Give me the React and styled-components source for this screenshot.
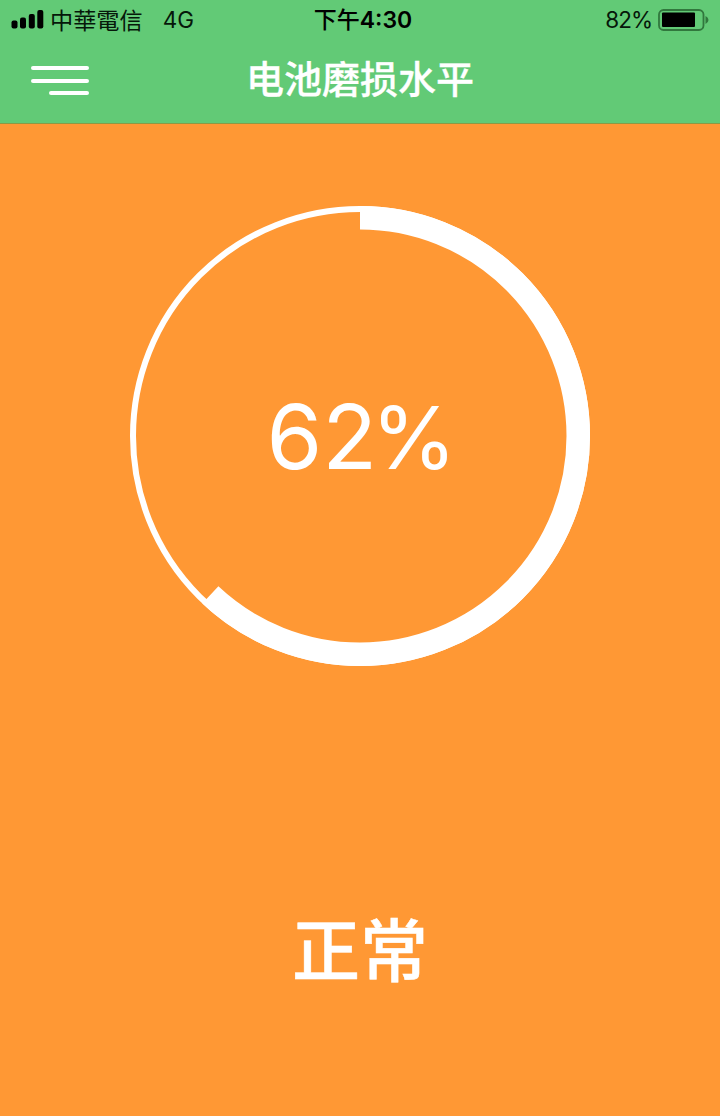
import React from 'react';
import styled, { createGlobalStyle } from 'styled-components';

const GlobalStyle = createGlobalStyle`
  * {
    box-sizing: border-box;
  }

  body {
    margin: 0;
    font-family: Inter, 'Noto Sans CJK SC', sans-serif;
  }
`;

const Screen = styled.div`
  display: flex;
  flex-direction: column;
  width: 720px;
  height: 1116px;
  overflow: hidden;
  background: #ff9834;
`;

const Header = styled.header`
  height: 124px;
  background: #62ca76;
  border-bottom: 1px solid #8b9a45;
`;

const StatusBar = styled.div`
  display: grid;
  grid-template-columns: 1fr auto 1fr;
  align-items: center;
  height: 40px;
  padding: 0 11px;
  color: #06180a;
  font-size: 23px;
  line-height: 40px;
  white-space: nowrap;
`;

const StatusGroup = styled.div`
  display: flex;
  align-items: center;
  justify-content: ${props => props.$end ? 'flex-end' : 'flex-start'};
`;

const Carrier = styled.span`
  margin: 0 20px 0 6px;
  padding-bottom: 2px;
  font-family: 'Noto Sans CJK TC', sans-serif;
  font-size: 23.2px;
  line-height: 38px;
`;

const Network = styled.span`
  font-size: 22.5px;
`;

const Clock = styled.span`
  padding-left: 6px;
  color: #000;
  font-weight: 600;
  font-family: Inter, 'Noto Sans CJK TC', sans-serif;
`;

const Meridiem = styled.span`
  font-weight: 500;
`;

const Charge = styled.span`
  margin-right: 6px;
  font-size: 22.5px;
  letter-spacing: -1px;
`;

const NavBar = styled.div`
  display: grid;
  grid-template-columns: 58px 1fr 58px;
  align-items: center;
  height: 80px;
  padding: 0 31px;
`;

const MenuButton = styled.button`
  display: flex;
  flex-direction: column;
  align-items: flex-end;
  gap: 8.5px;
  padding: 1px 0 0;
  border: 0;
  background: none;
`;

const MenuLine = styled.span`
  width: ${props => props.$short ? '40px' : '58px'};
  height: 4px;
  border-radius: 2px;
  background: #fff;
`;

const Title = styled.h1`
  margin: 0;
  padding-bottom: 2px;
  color: #fff;
  font-size: 38px;
  font-weight: 500;
  line-height: 78px;
  text-align: center;
  -webkit-text-stroke: 0.3px #fff;
`;

const Content = styled.main`
  display: flex;
  flex-direction: column;
  align-items: center;
  padding-top: 82px;
`;

const Gauge = styled.div`
  display: grid;
  place-items: center;
  width: 460px;
  height: 460px;

  > * {
    grid-area: 1 / 1;
  }
`;

const Percent = styled.span`
  padding: 1px 0 0 3px;
  color: #fff;
  font-size: 90px;
  font-weight: 400;
  line-height: 1;
`;

const PercentSign = styled.span`
  margin-left: -6px;
  font-size: 87px;
`;

const Verdict = styled.p`
  margin: 235px 0 0;
  color: #fff;
  font-size: 68px;
  font-weight: 500;
  line-height: 100px;
  -webkit-text-stroke: 0.5px #fff;
`;

const SignalIcon = () => (
  <svg width="33" height="20" viewBox="0 0 33 20">
    <rect x="0.5" y="10.5" width="6" height="8" rx="2" />
    <rect x="9" y="7.5" width="6" height="11" rx="2" />
    <rect x="17.8" y="4" width="6" height="14.5" rx="2" />
    <rect x="26.3" y="0" width="6" height="18.5" rx="2" />
  </svg>
);

const BatteryIcon = () => (
  <svg width="51" height="22" viewBox="0 0 51 22">
    <rect x="1" y="1" width="44.5" height="20" rx="4.5" fill="none" stroke="#31773d" strokeWidth="1.8" />
    <rect x="4" y="3.5" width="33" height="14.5" rx="1" fill="#000" />
    <path d="M47.5 7 Q50.5 8.5 50.5 11 T47.5 15 Z" fill="#31773d" />
  </svg>
);

const SIZE = 460;
const OUTER = SIZE / 2;

const WearRing = ({ value }) => {
  const thick = 23.5;
  const radius = OUTER - thick / 2;
  const length = 2 * Math.PI * radius;

  return (
    <svg width={SIZE} height={SIZE} viewBox={`0 0 ${SIZE} ${SIZE}`} fill="none" stroke="#fff">
      <circle cx={OUTER} cy={OUTER} r={OUTER - 3} strokeWidth="6" />
      <circle
        cx={OUTER}
        cy={OUTER}
        r={radius}
        strokeWidth={thick}
        strokeDasharray={`${length * value / 100} ${length}`}
        transform={`rotate(-90 ${OUTER} ${OUTER})`}
      />
    </svg>
  );
};

const App = () => {
  const wear = 62;

  return (
    <Screen>
      <GlobalStyle />
      <Header>
        <StatusBar>
          <StatusGroup>
            <SignalIcon />
            <Carrier>中華電信</Carrier>
            <Network>4G</Network>
          </StatusGroup>
          <Clock><Meridiem>下午</Meridiem>4:30</Clock>
          <StatusGroup $end>
            <Charge>82%</Charge>
            <BatteryIcon />
          </StatusGroup>
        </StatusBar>
        <NavBar>
          <MenuButton aria-label="菜单">
            <MenuLine />
            <MenuLine />
            <MenuLine $short />
          </MenuButton>
          <Title>电池磨损水平</Title>
        </NavBar>
      </Header>
      <Content>
        <Gauge>
          <WearRing value={wear} />
          <Percent>{wear}<PercentSign>%</PercentSign></Percent>
        </Gauge>
        <Verdict>正常</Verdict>
      </Content>
    </Screen>
  );
};

export default App;
